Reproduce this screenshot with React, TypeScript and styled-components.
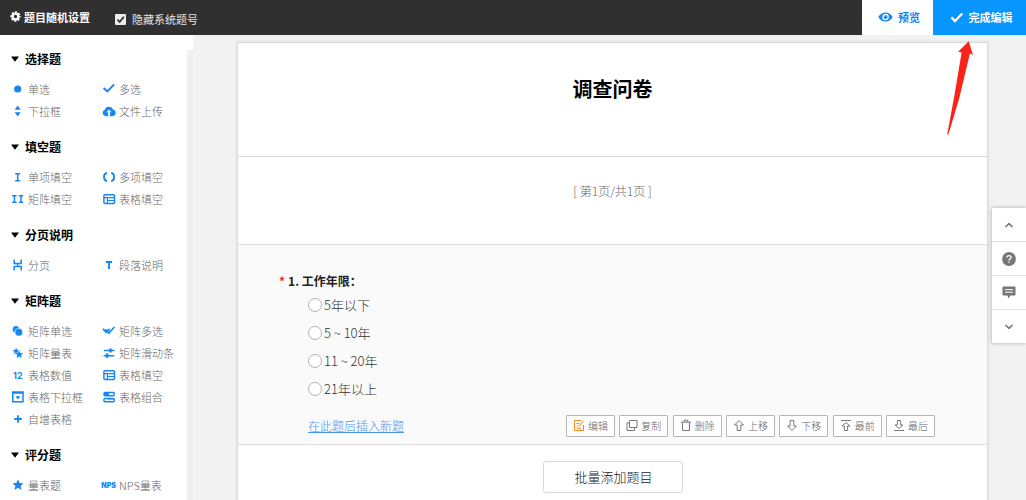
import React from 'react';
import styled, { createGlobalStyle } from 'styled-components';

const GlobalStyle = createGlobalStyle`
  * { box-sizing: border-box; }
  body {
    margin: 0;
    overflow: hidden;
    background: #f2f2f2;
    font-family: "Noto Sans CJK SC", sans-serif;
    font-weight: 300;
  }
  button { font-family: inherit; cursor: pointer; }
`;

const Page = styled.div`
  display: flex;
  flex-direction: column;
  height: 100vh;
`;

const TopBar = styled.header`
  display: flex;
  flex: none;
  align-items: stretch;
  height: 35px;
  background: #303030;
  color: #fff;
`;

const RandomButton = styled.button`
  display: flex;
  align-items: center;
  gap: 3px;
  padding: 0 0 2px 10px;
  border: 0;
  background: none;
  color: #fff;
  font-size: 11px;
  font-weight: 700;
`;

const HideLabel = styled.label`
  display: flex;
  align-items: center;
  gap: 6px;
  margin-left: 25px;
  padding-top: 3px;
  font-size: 11px;
  font-weight: 400;
  color: #e4e4e4;
`;

const TickBox = styled.input`
  appearance: none;
  width: 11px;
  height: 11px;
  margin: 0;
  border-radius: 1px;
  background: #ececec;
`;

const TickWrap = styled.span`
  display: grid;
  width: 11px;
  height: 11px;
  > * { grid-area: 1 / 1; }
  svg { pointer-events: none; }
`;

const TopActions = styled.div`
  display: flex;
  margin-left: auto;
`;

const TopAction = styled.button<{ $primary?: boolean }>`
  display: flex;
  align-items: center;
  justify-content: center;
  gap: 5px;
  width: ${p => (p.$primary ? 93 : 71)}px;
  padding: 0 0 1px 3px;
  border: 0;
  background: ${p => (p.$primary ? '#0795ff' : '#fff')};
  color: ${p => (p.$primary ? '#fff' : '#1787f0')};
  font-size: 11px;
  font-weight: 700;
`;

const Body = styled.div`
  display: flex;
  flex: 1;
  min-height: 0;
`;

const Sidebar = styled.nav`
  display: flex;
  flex: none;
  width: 193px;
  background: #fff;
  overflow: hidden;
`;

const SidebarList = styled.div`
  flex: 1;
  padding-top: 12px;
`;

const ScrollTrack = styled.div`
  width: 6px;
  margin-top: 15px;
  background: #efefef;
`;

const Group = styled.section`
  padding-bottom: 13px;
`;

const GroupTitle = styled.h2`
  display: flex;
  align-items: center;
  gap: 6px;
  height: 24px;
  margin: 0 0 7px;
  padding-left: 11px;
  font-size: 12px;
  font-weight: 700;
  line-height: 24px;
  color: #000;
`;

const GroupItems = styled.div`
  display: grid;
  grid-template-columns: 91px 1fr;
  padding-left: 11px;
`;

const TypeButton = styled.button`
  display: flex;
  align-items: center;
  gap: 3px;
  height: 22px;
  padding: 0;
  border: 0;
  background: none;
  color: #666;
  font-size: 11px;
  font-weight: 300;
  white-space: nowrap;
`;

const Main = styled.main`
  flex: 1;
  min-width: 0;
  padding: 7px 38px 0 44px;
  overflow: hidden;
`;

const Sheet = styled.article`
  min-height: 100%;
  border: 1px solid #dcdcdc;
  background: #fff;
  box-shadow: 0 0 3px rgba(0, 0, 0, 0.12);
`;

const SheetHead = styled.div`
  padding: 30px 0 51px;
  border-bottom: 1px solid #dcdcdc;
  text-align: center;
`;

const SheetTitle = styled.h1`
  margin: 0;
  font-size: 20px;
  font-weight: 700;
  line-height: 32px;
  color: #000;
`;

const Pager = styled.div`
  padding: 24px 0 43px;
  border-bottom: 1px solid #dcdcdc;
  color: #666;
  font-size: 12px;
  line-height: 20px;
  text-align: center;
`;

const Question = styled.section`
  padding: 26px 52px 7px 41px;
  border-bottom: 1px solid #dcdcdc;
  background: #fafafa;
`;

const QuestionSet = styled.fieldset`
  margin: 0;
  padding: 0;
  border: 0;
`;

const QuestionTitle = styled.legend`
  padding: 0;
  font-size: 12px;
  font-weight: 700;
  line-height: 20px;
  color: #222;
`;

const Required = styled.span`
  margin-right: 3px;
  color: #f22;
`;

const Option = styled.label`
  display: flex;
  align-items: center;
  gap: 2px;
  height: 28px;
  padding: 0 0 1px 29px;
  font-size: 13px;
  line-height: 18px;
  color: #333;
`;

const Radio = styled.input`
  appearance: none;
  width: 14px;
  height: 14px;
  margin: 0;
  border: 1px solid #b4b4b4;
  border-radius: 50%;
  background: #fff;
`;

const QuestionFoot = styled.div`
  display: flex;
  align-items: center;
  justify-content: space-between;
  margin-top: 12px;
  padding-left: 29px;
`;

const InsertLink = styled.a`
  color: #4a94ee;
  font-size: 12px;
  line-height: 22px;
`;

const Tools = styled.div`
  display: flex;
  justify-content: space-between;
  width: 369px;
`;

const ToolButton = styled.button`
  display: flex;
  align-items: center;
  justify-content: center;
  gap: 3px;
  width: 49px;
  height: 22px;
  padding: 0 0 1px;
  border: 1px solid #b6b6b6;
  border-radius: 1px;
  background: #fff;
  color: #666;
  font-size: 10px;
  font-weight: 300;
`;

const AddRow = styled.div`
  display: flex;
  justify-content: center;
  padding: 16px 0;
`;

const AddButton = styled.button`
  width: 140px;
  height: 32px;
  padding: 0 0 1px 2px;
  border: 1px solid #d9d9d9;
  border-radius: 3px;
  background: #fff;
  color: #222;
  font-size: 13px;
  font-weight: 300;
`;

const Dock = styled.aside`
  position: fixed;
  right: 0;
  top: 208px;
  width: 34px;
  background: #fff;
  box-shadow: 0 0 4px rgba(0, 0, 0, 0.3);
`;

const DockButton = styled.button`
  display: flex;
  align-items: center;
  justify-content: center;
  width: 100%;
  height: 34px;
  padding: 0;
  border: 0;
  border-bottom: 1px solid #e2e2e2;
  background: none;
  &:last-child {
    height: 33px;
    border-bottom: 0;
  }
`;

const Pointer = styled.svg`
  position: fixed;
  top: 41px;
  right: 52px;
  pointer-events: none;
`;

const BLUE = '#1787f0';
const line = { fill: 'none', stroke: BLUE, strokeWidth: 1.5 };
const star = 'M7 1.8 8.5 5.2 12 5.5 9.4 7.9 10.2 11.5 7 9.6 3.8 11.5 4.6 7.9 2 5.5 5.5 5.2Z';

const gridIcon = (
  <g {...line} strokeWidth={1.5}>
    <rect x="1.9" y="2.8" width="10.6" height="8.6" rx="1" />
    <path d="M2 5.600h10.500M5.400 5.600v5.800M5.400 8.500h7" strokeWidth={1.2} />
  </g>
);

const icons: Record<string, React.ReactNode> = {
  dot: <circle cx="6.7" cy="7" r="3.6" fill={BLUE} />,
  check: <path d="M1.6 6 5.3 9.4 12.2 2.4" {...line} strokeWidth={2} />,
  updown: <path d="M6.7 1.500 9.700 5.700H3.700ZM6.700 12.500 9.700 8.300H3.700Z" fill={BLUE} />,
  cloud: (
    <>
      <path d="M3.700 12.200A3.400 3.400 0 0 1 2.700 5.700 4.400 4.400 0 0 1 11 5.500 3.400 3.400 0 0 1 10.500 12.200Z" fill={BLUE} />
      <path d="M7 5.4 9.7 8.3H7.9V12.300H6.1V8.3H4.3Z" fill="#fff" />
    </>
  ),
  single: <path d="M4.2 3.7h5M4.2 10.7h5M6.7 3.7v7" {...line} />,
  brackets: <path d="M5 3C2.6 3.3 2 5.3 2 7s.6 3.7 3 4M9.2 3c2.4.3 3 2.3 3 4s-.6 3.7-3 4" {...line} strokeWidth={1.8} />,
  double: <path d="M1.2 3.7h4.4M1.2 10.3h4.4M3.4 3.7v6.6M7.8 3.7h4.4M7.8 10.3h4.4M10 3.7v6.6" {...line} />,
  grid: gridIcon,
  pagebreak: <path d="M3.2 1.6v4h7v-4M3.2 12.4v-4h7v4M6.7 5.6v2.8" {...line} />,
  text: <path d="M3.9 4h6.2M7 4v7" {...line} strokeWidth={1.9} />,
  circles: (
    <>
      <circle cx="4.900" cy="5.300" r="3.200" fill={BLUE} />
      <circle cx="7.8" cy="8.2" r="3.900" fill={BLUE} stroke="#fff" strokeWidth=".6" />
    </>
  ),
  doublecheck: <path d="M1 4.8 4.6 9M3.7 5.2 6.8 9.2 12.4 3M5.6 7.4 7.6 4.9" {...line} strokeWidth={1.7} />,
  stars: (
    <>
      <path d={star} fill={BLUE} transform="translate(.2 .4) scale(.7)" />
      <path d={star} fill={BLUE} stroke="#fff" strokeWidth=".5" transform="translate(2 2.300) scale(.88)" />
    </>
  ),
  sliders: (
    <>
      <path d="M2 4.5h10.6M1.6 9.7h10.6" {...line} />
      <path d="M7.2 2.4h2.6v4.2H7.2ZM3.8 7.6h2.6v4.2H3.8Z" fill={BLUE} />
    </>
  ),
  numbers: <text x="6.8" y="10.6" textAnchor="middle" fontFamily="Inter, sans-serif" fontWeight="700" fontSize="9" fill={BLUE}>12</text>,
  dropdown: (
    <>
      <rect x="1.8" y="2" width="10.2" height="9.8" {...line} />
      <path d="M1.5 2h10.8v1.8H1.5ZM4.4 6.2h5L6.9 9.6Z" fill={BLUE} />
    </>
  ),
  combo: (
    <>
      <rect x="2" y="2.4" width="10.2" height="3.4" rx="1" {...line} />
      <rect x="2" y="8.4" width="10.2" height="3.4" rx="1" {...line} />
      <path d="M2 2.400h5v3.400H2ZM5.500 8.400h6.500v1.200H5.500Z" fill={BLUE} />
    </>
  ),
  plus: <path d="M7 3.2v7.6M3.2 7h7.6" {...line} strokeWidth={1.8} />,
  star: <path d={star} fill={BLUE} transform="translate(-.7 -.7) scale(1.1)" />,
  nps: <text x="6.6" y="10" textAnchor="middle" fontFamily="Inter, sans-serif" fontWeight="900" fontSize="7" fill={BLUE}>NPS</text>,
};

const groups: { title: string; items: [string, string][] }[] = [
  { title: '选择题', items: [['dot', '单选'], ['check', '多选'], ['updown', '下拉框'], ['cloud', '文件上传']] },
  { title: '填空题', items: [['single', '单项填空'], ['brackets', '多项填空'], ['double', '矩阵填空'], ['grid', '表格填空']] },
  { title: '分页说明', items: [['pagebreak', '分页'], ['text', '段落说明']] },
  {
    title: '矩阵题',
    items: [
      ['circles', '矩阵单选'], ['doublecheck', '矩阵多选'],
      ['stars', '矩阵量表'], ['sliders', '矩阵滑动条'],
      ['numbers', '表格数值'], ['grid', '表格填空'],
      ['dropdown', '表格下拉框'], ['combo', '表格组合'],
      ['plus', '自增表格'],
    ],
  },
  { title: '评分题', items: [['star', '量表题'], ['nps', 'NPS量表']] },
];

const tools: { label: string; color?: string; d: string }[] = [
  { label: '编辑', color: '#f08a24', d: 'M8 1.5H1.5v10h9V6M3.5 4.5h3M3.5 7h2M3.5 9.3h5M6 7.2 10.8 1.6' },
  { label: '复制', d: 'M3.5 1.5h7.5v7H3.5ZM3.5 4H1v7.5h7.5v-3' },
  { label: '删除', d: 'M1 3.2h10M2.5 3.2v8.3h7V3.2M4.2 3V1.2h3.6V3' },
  { label: '上移', d: 'M6 1.500 10.500 6H7.800V11.500H4.200V6H1.500Z' },
  { label: '下移', d: 'M6 11.500 10.500 7H7.800V1.500H4.200V7H1.500Z' },
  { label: '最前', d: 'M1 1.5h10M6 3.5 10 7H7.6v4.5H4.4V7H2Z' },
  { label: '最后', d: 'M1 11.5h10M6 9.5 10 6H7.6V1.5H4.4V6H2Z' },
];

const options = ['5年以下', '5 ~ 10年', '11 ~ 20年', '21年以上'];

export default function App() {
  return (
    <Page>
      <GlobalStyle />
      <TopBar>
        <RandomButton>
          <svg width="11" height="11" viewBox="0 0 11 11">
            <circle cx="5.5" cy="5.5" r="2.9" fill="none" stroke="#fff" strokeWidth="2.400" />
            <circle cx="5.5" cy="5.5" r="4.4" fill="none" stroke="#fff" strokeWidth="1.6" strokeDasharray="2.1 1.356" strokeDashoffset="1.05" />
          </svg>
          题目随机设置
        </RandomButton>
        <HideLabel>
          <TickWrap>
            <TickBox type="checkbox" defaultChecked />
            <svg width="11" height="11" viewBox="0 0 11 11">
              <path d="M2.4 5.6 4.7 8 8.8 2.8" fill="none" stroke="#303030" strokeWidth="1.8" />
            </svg>
          </TickWrap>
          隐藏系统题号
        </HideLabel>
        <TopActions>
          <TopAction>
            <svg width="15" height="10" viewBox="0 0 15 10">
              <path d="M.3 5C2 2 4.6.4 7.5.4S13 2 14.7 5C13 8 10.4 9.6 7.5 9.6S2 8 .3 5Z" fill={BLUE} />
              <circle cx="7.5" cy="5" r="2.7" fill={BLUE} stroke="#fff" strokeWidth="1.2" />
              <path d="M5.9 5a1.6 1.6 0 0 1 1.6-1.6" fill="none" stroke="#fff" strokeWidth=".6" />
            </svg>
            预览
          </TopAction>
          <TopAction $primary>
            <svg width="14" height="11" viewBox="0 0 14 11">
              <path d="M1.5 5.4 5 9 12.2 1.5" fill="none" stroke="#fff" strokeWidth="2.3" />
            </svg>
            完成编辑
          </TopAction>
        </TopActions>
      </TopBar>

      <Body>
        <Sidebar>
          <SidebarList>
            {groups.map(group => (
              <Group key={group.title}>
                <GroupTitle>
                  <svg width="8" height="6" viewBox="0 0 8 6"><path d="M0 .5h8L4 5.7Z" fill="#000" /></svg>
                  {group.title}
                </GroupTitle>
                <GroupItems>
                  {group.items.map(([icon, label]) => (
                    <TypeButton key={label}>
                      <svg width="14" height="14" viewBox="0 0 14 14" overflow="visible">{icons[icon]}</svg>
                      {label}
                    </TypeButton>
                  ))}
                </GroupItems>
              </Group>
            ))}
          </SidebarList>
          <ScrollTrack />
        </Sidebar>

        <Main>
          <Sheet>
            <SheetHead><SheetTitle>调查问卷</SheetTitle></SheetHead>
            <Pager>[ 第1页/共1页 ]</Pager>
            <Question>
              <QuestionSet>
                <QuestionTitle><Required>*</Required>1. 工作年限：</QuestionTitle>
                {options.map(option => (
                  <Option key={option}>
                    <Radio type="radio" name="years" />
                    {option}
                  </Option>
                ))}
              </QuestionSet>
              <QuestionFoot>
                <InsertLink href="#insert">在此题后插入新题</InsertLink>
                <Tools>
                  {tools.map(tool => (
                    <ToolButton key={tool.label}>
                      <svg width="12" height="13" viewBox="0 0 12 13">
                        <path d={tool.d} fill="none" stroke={tool.color || '#777'} strokeWidth="1" />
                      </svg>
                      {tool.label}
                    </ToolButton>
                  ))}
                </Tools>
              </QuestionFoot>
            </Question>
            <AddRow><AddButton>批量添加题目</AddButton></AddRow>
          </Sheet>
        </Main>
      </Body>

      <Dock>
        <DockButton aria-label="上一题">
          <svg width="10" height="6" viewBox="0 0 10 6"><path d="M1.5 5 5 1.6 8.5 5" fill="none" stroke="#777" strokeWidth="1.6" /></svg>
        </DockButton>
        <DockButton aria-label="帮助">
          <svg width="14" height="14" viewBox="0 0 14 14">
            <circle cx="7" cy="7" r="6.9" fill="#777" />
            <path d="M4.9 5.6C4.900 2.9 9.1 2.9 9.1 5.5 9.1 7 7 7 7 8.7M7 9.7v1.4" fill="none" stroke="#fff" strokeWidth="1.3" />
          </svg>
        </DockButton>
        <DockButton aria-label="反馈">
          <svg width="14" height="13" viewBox="0 0 14 13">
            <path d="M1.5.5h11q1 0 1 1v7q0 1-1 1H8.5L6.300 12.5 5.500 9.5h-4q-1 0-1-1v-7q0-1 1-1Z" fill="#777" />
            <path d="M3 3.6h8M3 6.2h8" stroke="#fff" strokeWidth="1" />
          </svg>
        </DockButton>
        <DockButton aria-label="下一题">
          <svg width="10" height="6" viewBox="0 0 10 6"><path d="M1.5 1 5 4.4 8.5 1" fill="none" stroke="#777" strokeWidth="1.6" /></svg>
        </DockButton>
      </Dock>

      <Pointer width="28" height="95" viewBox="0 0 28 95">
        <path d="M22.700.3 27 14 24 12.300 13 58 2.400 93.500H1.200L8.500 54 15.600 11.500 12.200 10.800Z" fill="#f9231a" />
      </Pointer>
    </Page>
  );
}
